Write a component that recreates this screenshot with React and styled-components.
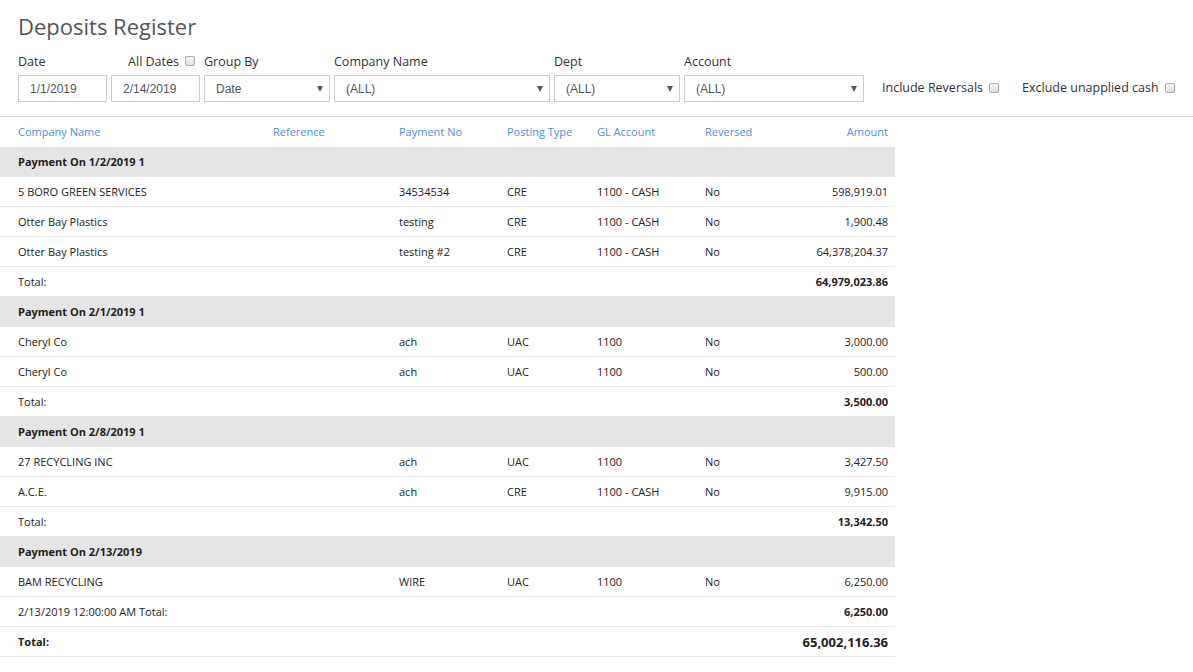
import React from 'react';
import styled, { createGlobalStyle } from 'styled-components';

const GlobalStyle = createGlobalStyle`
  body {
    margin: 0;
    background: #fff;
    font-family: "Open Sans", "Liberation Sans", Arial, sans-serif;
    color: #222;
  }
  * { box-sizing: border-box; }
`;

const Header = styled.div`
  padding: 10px 18px 14px;
  border-bottom: 1px solid #ddd;
`;

const Title = styled.h1`
  margin: 0;
  font-size: 22px;
  line-height: 32px;
  font-weight: 400;
  color: #555;
`;

const Filters = styled.div`
  display: flex;
  align-items: flex-end;
  gap: 4px;
  margin-top: 10px;
  white-space: nowrap;
`;

const Field = styled.div`
  display: flex;
  flex-direction: column;
  gap: 5px;
  flex-shrink: 0;
`;

const LabelRow = styled.div`
  display: flex;
  justify-content: space-between;
  align-items: center;
  height: 18px;
  font-size: 12.5px;
  color: #333;
  padding-right: ${({ $pr }) => $pr || 0}px;
`;

const Inline = styled.span`
  display: inline-flex;
  align-items: center;
  gap: 6px;
  white-space: nowrap;
`;

const Check = styled.span`
  display: inline-block;
  width: 10px;
  height: 10px;
  border: 1px solid #a9a9a9;
  border-radius: 2px;
  background: linear-gradient(#f4f4f4, #e2e2e2);
`;

const Inputs = styled.div`
  display: flex;
  gap: 4px;
`;

const TextBox = styled.div`
  width: ${({ $w }) => $w}px;
  height: 27px;
  border: 1px solid #ccc;
  padding-left: 11px;
  display: flex;
  align-items: center;
  font-family: "Liberation Sans", Arial, sans-serif;
  font-size: 12px;
  color: #555;
`;

const SelectBox = styled(TextBox)`
  justify-content: space-between;
  padding-right: 6px;
`;

const Arrow = styled.span`
  width: 0;
  height: 0;
  border-left: 3px solid transparent;
  border-right: 3px solid transparent;
  border-top: 6px solid #555;
`;

const Toggles = styled.div`
  display: flex;
  align-items: center;
  flex-shrink: 0;
  gap: 23px;
  height: 25px;
  margin: 0 0 2px 14px;
  font-size: 12.5px;
  color: #333;
`;

const Table = styled.div`
  width: 895px;
  font-size: 11px;
`;

const Row = styled.div`
  display: grid;
  grid-template-columns: 255px 126px 108px 90px 108px 100px 1fr;
  height: 30px;
  align-items: center;
  padding-bottom: ${({ $head }) => ($head ? '2px' : '0')};
  border-bottom: ${({ $head }) => ($head ? 'none' : '1px solid #e8e8e8')};
  background: ${({ $group }) => ($group ? '#e5e5e5' : '#fff')};
  color: ${({ $head }) => ($head ? '#4f8edc' : '#222')};
  font-weight: ${({ $group }) => ($group ? 700 : 400)};
`;

const Cell = styled.div`
  padding-left: 18px;
  white-space: nowrap;
  font-weight: ${({ $bold }) => ($bold ? 700 : 'inherit')};
  grid-column: ${({ $span }) => $span || 'auto'};
`;

const Amount = styled.div`
  grid-column: 7;
  text-align: right;
  padding-right: 7px;
  white-space: nowrap;
  font-weight: ${({ $bold }) => ($bold ? 700 : 'inherit')};
  font-size: ${({ $big }) => ($big ? '13px' : 'inherit')};
`;

const groups = [
  {
    title: 'Payment On 1/2/2019 1',
    rows: [
      ['5 BORO GREEN SERVICES', '', '34534534', 'CRE', '1100 - CASH', 'No', '598,919.01'],
      ['Otter Bay Plastics', '', 'testing', 'CRE', '1100 - CASH', 'No', '1,900.48'],
      ['Otter Bay Plastics', '', 'testing #2', 'CRE', '1100 - CASH', 'No', '64,378,204.37'],
    ],
    totalLabel: 'Total:',
    total: '64,979,023.86',
  },
  {
    title: 'Payment On 2/1/2019 1',
    rows: [
      ['Cheryl Co', '', 'ach', 'UAC', '1100', 'No', '3,000.00'],
      ['Cheryl Co', '', 'ach', 'UAC', '1100', 'No', '500.00'],
    ],
    totalLabel: 'Total:',
    total: '3,500.00',
  },
  {
    title: 'Payment On 2/8/2019 1',
    rows: [
      ['27 RECYCLING INC', '', 'ach', 'UAC', '1100', 'No', '3,427.50'],
      ['A.C.E.', '', 'ach', 'CRE', '1100 - CASH', 'No', '9,915.00'],
    ],
    totalLabel: 'Total:',
    total: '13,342.50',
  },
  {
    title: 'Payment On 2/13/2019',
    rows: [
      ['BAM RECYCLING', '', 'WIRE', 'UAC', '1100', 'No', '6,250.00'],
    ],
    totalLabel: '2/13/2019 12:00:00 AM Total:',
    total: '6,250.00',
  },
];

const columns = ['Company Name', 'Reference', 'Payment No', 'Posting Type', 'GL Account', 'Reversed'];

const App = () => (
  <>
    <GlobalStyle />
    <Header>
      <Title>Deposits Register</Title>
      <Filters>
        <Field>
          <LabelRow $pr={5}>
            <span>Date</span>
            <Inline>All Dates <Check /></Inline>
          </LabelRow>
          <Inputs>
            <TextBox $w={89}>1/1/2019</TextBox>
            <TextBox $w={89}>2/14/2019</TextBox>
          </Inputs>
        </Field>
        <Field>
          <LabelRow>Group By</LabelRow>
          <SelectBox $w={126}>Date<Arrow /></SelectBox>
        </Field>
        <Field>
          <LabelRow>Company Name</LabelRow>
          <SelectBox $w={216}>(ALL)<Arrow /></SelectBox>
        </Field>
        <Field>
          <LabelRow>Dept</LabelRow>
          <SelectBox $w={126}>(ALL)<Arrow /></SelectBox>
        </Field>
        <Field>
          <LabelRow>Account</LabelRow>
          <SelectBox $w={180}>(ALL)<Arrow /></SelectBox>
        </Field>
        <Toggles>
          <Inline>Include Reversals <Check /></Inline>
          <Inline>Exclude unapplied cash <Check /></Inline>
        </Toggles>
      </Filters>
    </Header>
    <Table>
      <Row $head>
        {columns.map((c) => <Cell key={c}>{c}</Cell>)}
        <Amount>Amount</Amount>
      </Row>
      {groups.map((g) => (
        <React.Fragment key={g.title}>
          <Row $group>
            <Cell $span="1 / 8">{g.title}</Cell>
          </Row>
          {g.rows.map((r, i) => (
            <Row key={i}>
              {r.slice(0, 6).map((v, j) => <Cell key={j}>{v}</Cell>)}
              <Amount>{r[6]}</Amount>
            </Row>
          ))}
          <Row>
            <Cell $span="1 / 7">{g.totalLabel}</Cell>
            <Amount $bold>{g.total}</Amount>
          </Row>
        </React.Fragment>
      ))}
      <Row>
        <Cell $span="1 / 7" $bold>Total:</Cell>
        <Amount $bold $big>65,002,116.36</Amount>
      </Row>
    </Table>
  </>
);

export default App;
